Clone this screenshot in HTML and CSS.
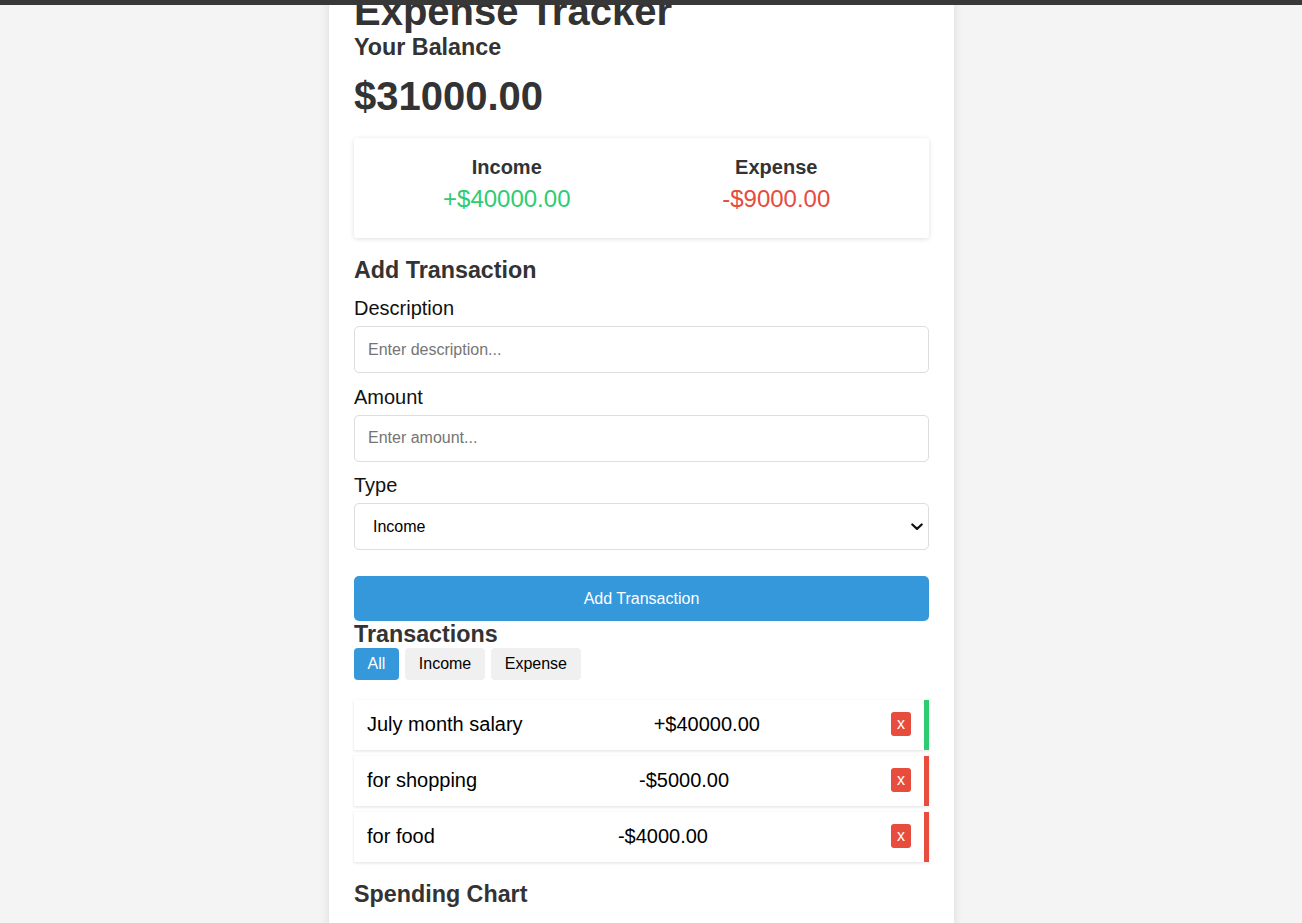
FILE: index.html
```html
<!DOCTYPE html>
<html lang="en">
<head>
<meta charset="utf-8">
<title>Expense Tracker</title>
<link rel="stylesheet" href="styles.css">
</head>
<body>
<div class="topbar"></div>
<main class="container">
  <h1 class="title">Expense Tracker</h1>
  <h2 class="balance-label">Your Balance</h2>
  <div class="balance">$31000.00</div>

  <section class="summary">
    <div class="summary-col">
      <h4 class="summary-label">Income</h4>
      <p class="summary-money plus">+$40000.00</p>
    </div>
    <div class="summary-col">
      <h4 class="summary-label">Expense</h4>
      <p class="summary-money minus">-$9000.00</p>
    </div>
  </section>

  <h3 class="section-title">Add Transaction</h3>
  <form class="form">
    <div class="field">
      <label class="field-label" for="desc">Description</label>
      <input class="field-input" id="desc" type="text" placeholder="Enter description...">
    </div>
    <div class="field">
      <label class="field-label" for="amount">Amount</label>
      <input class="field-input" id="amount" type="text" placeholder="Enter amount...">
    </div>
    <div class="field">
      <label class="field-label" for="type">Type</label>
      <div class="select-wrap">
        <select class="field-select" id="type">
          <option>Income</option>
          <option>Expense</option>
        </select>
        <svg class="chevron" width="12" height="8" viewBox="0 0 12 8"><path d="M1.3 1.5l4.7 4.4 4.7-4.4" fill="none" stroke="#111" stroke-width="2.2" stroke-linecap="round" stroke-linejoin="round"/></svg>
      </div>
    </div>
    <button class="btn-primary" type="button">Add Transaction</button>
  </form>

  <h3 class="section-title tx-title">Transactions</h3>
  <div class="filters">
    <button class="filter active" type="button">All</button>
    <button class="filter" type="button">Income</button>
    <button class="filter" type="button">Expense</button>
  </div>

  <ul class="list">
    <li class="item income">
      <span class="item-desc">July month salary</span>
      <span class="item-amt">+$40000.00</span>
      <button class="del" type="button">x</button>
    </li>
    <li class="item expense">
      <span class="item-desc">for shopping</span>
      <span class="item-amt">-$5000.00</span>
      <button class="del" type="button">x</button>
    </li>
    <li class="item expense">
      <span class="item-desc">for food</span>
      <span class="item-amt">-$4000.00</span>
      <button class="del" type="button">x</button>
    </li>
  </ul>

  <h3 class="section-title chart-title">Spending Chart</h3>
</main>
</body>
</html>
```

FILE: styles.css
```css
* { box-sizing: border-box; }

html, body {
  margin: 0;
  padding: 0;
}

body {
  background: #f4f4f4;
  font-family: "Liberation Sans", Arial, Helvetica, sans-serif;
  color: #000;
  overflow: hidden;
  padding-right: 19px;
}

.topbar {
  position: fixed;
  top: 0;
  left: 0;
  right: 0;
  height: 5px;
  background: #383838;
  z-index: 10;
}

.container {
  width: 625px;
  margin: 0 auto;
  min-height: 100vh;
  background: #fff;
  padding: 0 25px 40px;
  box-shadow: 0 0 10px rgba(0, 0, 0, 0.1);
}

.title {
  margin: -11px 0 0;
  font-size: 40px;
  font-weight: bold;
  color: #333;
}

.balance-label {
  margin: 0;
  font-size: 23.3px;
  font-weight: bold;
  color: #333;
}

.balance {
  margin-top: 13px;
  font-size: 40px;
  font-weight: bold;
  color: #333;
}

.summary {
  margin-top: 19px;
  display: flex;
  background: #fff;
  padding: 18px 18px 25px;
  border-radius: 3px;
  box-shadow: 0 1px 5px rgba(0, 0, 0, 0.13);
}

.summary-col {
  flex: 1;
  text-align: center;
}

.summary-label {
  margin: 0 0 6px;
  font-size: 20px;
  font-weight: bold;
  color: #333;
}

.summary-money {
  margin: 0;
  font-size: 24px;
}

.plus { color: #2ecc71; }
.minus { color: #e74c3c; }

.section-title {
  margin: 19px 0 0;
  font-size: 23.3px;
  font-weight: bold;
  color: #333;
}

.form {
  margin-top: 13px;
}

.field {
  margin-bottom: 12.5px;
}

.field-label {
  display: block;
  margin-bottom: 6px;
  font-size: 20px;
  color: #111;
}

.field-input,
.field-select {
  display: block;
  width: 100%;
  margin: 0;
  font-family: inherit;
  font-size: 16px;
  color: #000;
  background: #fff;
  border: 1px solid #ddd;
  border-radius: 5px;
  outline: none;
}

.field-input {
  height: 47px;
  padding: 0 13px;
}

.field-input::placeholder {
  color: #757575;
}

.select-wrap {
  position: relative;
}

.field-select {
  height: 47px;
  padding: 0 30px 0 18px;
  -webkit-appearance: none;
  appearance: none;
}

.chevron {
  position: absolute;
  right: 6px;
  top: 20px;
  pointer-events: none;
}

.btn-primary {
  display: block;
  width: 100%;
  height: 45px;
  margin-top: 26px;
  padding: 0;
  border: none;
  border-radius: 5px;
  background: #3498db;
  color: #fff;
  font-family: inherit;
  font-size: 16px;
}

.tx-title {
  margin-top: 0;
}

.filters {
  display: flex;
  gap: 6.5px;
  margin-top: 0;
}

.filter {
  padding: 7px 13.5px;
  border: none;
  border-radius: 4px;
  background: #f0f0f0;
  color: #000;
  font-family: inherit;
  font-size: 16px;
}

.filter.active {
  background: #3498db;
  color: #fff;
}

.list {
  list-style: none;
  margin: 20px 0 0;
  padding: 0;
  display: flex;
  flex-direction: column;
  gap: 6px;
}

.item {
  display: flex;
  align-items: center;
  justify-content: space-between;
  height: 50px;
  padding: 0 13px 2px 13px;
  background: #fff;
  box-shadow: 0 1px 3px rgba(0, 0, 0, 0.12);
  font-size: 20px;
  color: #000;
}

.item.income { border-right: 5px solid #2ecc71; }
.item.expense { border-right: 5px solid #e74c3c; }

.del {
  padding: 3px 6px;
  border: none;
  border-radius: 3px;
  background: #e74c3c;
  color: #fff;
  font-family: inherit;
  font-size: 16px;
  line-height: 1.15;
}

.chart-title {
  margin-top: 19px;
}
```
